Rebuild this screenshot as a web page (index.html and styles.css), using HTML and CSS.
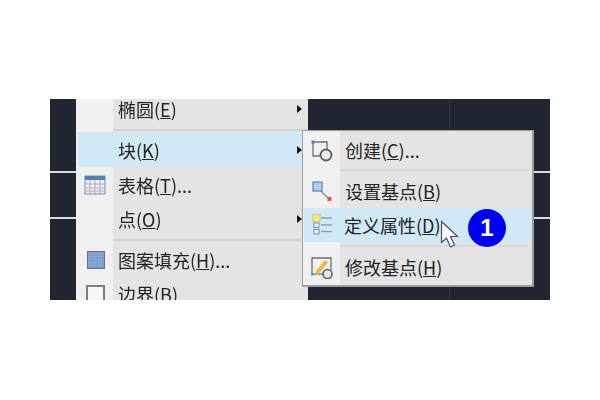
FILE: index.html
```html
<!DOCTYPE html>
<html lang="zh-CN">
<head>
  <meta charset="UTF-8" />
  <title>块菜单</title>
  <link rel="stylesheet" href="styles.css">
</head>
<body>
  <div class="canvas">
    <div class="menu">
      <div class="row first"><span class="icon"></span><span class="label">椭圆(<u>E</u>)</span><i class="arrow"></i></div>
      <div class="sep"></div>
      <div class="row active"><span class="icon"></span><span class="label">块(<u>K</u>)</span><i class="arrow"></i></div>
      <div class="row">
        <span class="icon">
          <svg width="22" height="20" viewBox="0 0 22 20">
            <rect x="1" y="1" width="20" height="18" fill="#f1eef2" stroke="#6b8fbb"/>
            <rect x="1" y="1" width="20" height="4" fill="#4f7fb5"/>
            <path d="M6 5v14M11 5v14M16 5v14M1 9h20M1 13h20M1 16h20" stroke="#b3a9b8" fill="none"/>
          </svg>
        </span>
        <span class="label">表格(<u>T</u>)...</span>
      </div>
      <div class="row"><span class="icon"></span><span class="label">点(<u>O</u>)</span><i class="arrow"></i></div>
      <div class="sep wide"></div>
      <div class="row">
        <span class="icon"><span class="hatch"></span></span>
        <span class="label">图案填充(<u>H</u>)...</span>
      </div>
      <div class="row">
        <span class="icon"><span class="box"></span></span>
        <span class="label">边界(<u>B</u>)</span>
      </div>

      <div class="submenu">
        <div class="row sub top">
          <span class="icon">
            <svg width="24" height="24" viewBox="0 0 24 24">
              <path d="M3 4h14v7M3 4v14h7" fill="none" stroke="#6e6e6e" stroke-width="1.3"/>
              <rect x="1.5" y="2.5" width="3" height="3" fill="#4f7fb5"/>
              <circle cx="16" cy="17" r="5.5" fill="#e8e8e8" stroke="#5f5f5f" stroke-width="1.8"/>
            </svg>
          </span>
          <span class="label">创建(<u>C</u>)...</span>
        </div>
        <div class="sep"></div>
        <div class="row sub">
          <span class="icon">
            <svg width="24" height="24" viewBox="0 0 24 24">
              <path d="M11 12l8 8" stroke="#8e8e8e" stroke-width="1.5"/>
              <rect x="3" y="3" width="9" height="9" fill="#aacdf0" stroke="#5c85b5" stroke-width="1.2"/>
              <rect x="17.5" y="18" width="4" height="4" fill="#dd5a33"/>
            </svg>
          </span>
          <span class="label">设置基点(<u>B</u>)</span>
        </div>
        <div class="row sub active">
          <span class="icon">
            <svg width="24" height="24" viewBox="0 0 24 24">
              <rect x="3" y="1.5" width="7" height="7" fill="#f5e58c" stroke="#d8c766"/>
              <path d="M11 5h11M11 12h11M11 18.500h11" stroke="#9a9fa4" stroke-width="1.4"/>
              <rect x="4" y="10" width="5" height="4.500" fill="#e8f2fa" stroke="#6f8fb0"/>
              <rect x="4" y="16.500" width="5" height="4.500" fill="#e8f2fa" stroke="#6f8fb0"/>
            </svg>
          </span>
          <span class="label">定义属性(<u>D</u>)</span>
        </div>
        <div class="sep"></div>
        <div class="row sub">
          <span class="icon">
            <svg width="24" height="24" viewBox="0 0 24 24">
              <path d="M2 19V3h19v12" fill="none" stroke="#6e6e6e" stroke-width="1.3"/>
              <path d="M2 19h12" stroke="#6e6e6e" stroke-width="1.3"/>
              <path d="M6 16l9-11 3 2.500-9 11-3.500 1z" fill="#f3b64a"/>
              <rect x="1" y="18" width="3" height="2.500" fill="#3aa0e8"/>
              <circle cx="17.500" cy="19" r="4.500" fill="#e8e8e8" stroke="#5f5f5f" stroke-width="1.6"/>
            </svg>
          </span>
          <span class="label">修改基点(<u>H</u>)</span>
        </div>
      </div>

      <svg class="cursor" width="20" height="30" viewBox="0 0 20 30">
        <path d="M1.500 1.500v21l5-4.500 4 9 4-2-4-8.500h7z" fill="#fff" stroke="#4a4f55" stroke-width="1.200"/>
      </svg>
      <div class="badge">1</div>
    </div>
  </div>
</body>
</html>
```

FILE: styles.css
```css
body {
  margin: 0;
  background-color: #fff;
}

.canvas {
  display: flex;
  width: 500px;
  height: 201px;
  margin: 99px 50px 0;
  padding-left: 26px;
  box-sizing: border-box;
  overflow: hidden;
  background-color: #1f2630;
  background-image:
    linear-gradient(#d8dadc, #d8dadc),
    linear-gradient(#d8dadc, #d8dadc),
    linear-gradient(#2f3742, #2f3742);
  background-size: 100% 2px, 100% 2px, 1px 100%;
  background-position: 0 72px, 0 118px, 399px 0;
  background-repeat: no-repeat;
}

.menu {
  position: relative;
  width: 232px;
  height: 240px;
  flex: none;
  background-color: #e4e4e4;
  background-image: linear-gradient(#f0f0f0, #f0f0f0);
  background-size: 37px 100%;
  background-repeat: no-repeat;
  font-family: "Noto Sans CJK SC", "Liberation Sans", sans-serif;
  font-size: 18px;
  line-height: 20px;
  color: #222;
  filter: blur(0.35px);
}

.row {
  display: flex;
  align-items: center;
  height: 34px;
}

.row.first {
  height: 20px;
  padding-bottom: 10px;
}

.row.active {
  height: 35px;
  margin: 1px 5px 1px 2px;
  background-color: #d1e9f7;
}

.row.active .icon {
  width: 35px;
}

.icon {
  display: flex;
  align-items: center;
  justify-content: center;
  width: 37px;
  height: 100%;
  flex: none;
}

.label {
  margin-left: 5px;
  white-space: nowrap;
}

.arrow {
  margin-left: auto;
  margin-right: 6px;
  border-left: 5px solid #111;
  border-top: 4px solid transparent;
  border-bottom: 4px solid transparent;
}

.row.active .arrow {
  margin-right: 1px;
}

.sep {
  height: 2px;
  margin-left: 37px;
  background-color: #d2d2d2;
}

.sep.wide {
  margin-top: 3px;
  margin-bottom: 2px;
}

.hatch {
  width: 16px;
  height: 16px;
  margin-left: 2px;
  border: 1px solid #6f6f6f;
  background-color: #7f9fd0;
  background-image: radial-gradient(#9db8e0 40%, transparent 45%);
  background-size: 3px 3px;
}

.box {
  width: 15px;
  height: 15px;
  margin-left: 2px;
  border: 2px solid #7d7d7d;
  background-color: #f7f7f7;
}

.submenu {
  position: absolute;
  left: 226px;
  top: 31px;
  width: 232px;
  height: 157px;
  box-sizing: border-box;
  border: 1px solid #9c9c9c;
  border-bottom-width: 2px;
  border-right-width: 2px;
  background-color: #e4e4e4;
  background-image: linear-gradient(#f0f0f0, #f0f0f0);
  background-size: 37px 100%;
  background-repeat: no-repeat;
}

.submenu .sep {
  margin-right: 3px;
  background-color: #d8d8d8;
}

.row.sub {
  height: 39px;
}

.row.sub.top {
  height: 38px;
}

.row.sub.active {
  height: 34px;
  margin: -2px 1px 3px;
}

.cursor {
  position: absolute;
  left: 364px;
  top: 121px;
}

.badge {
  position: absolute;
  left: 392px;
  top: 110px;
  width: 38px;
  height: 38px;
  border-radius: 50%;
  background-color: #0000f0;
  color: #fff;
  font-family: "Liberation Sans", sans-serif;
  font-size: 24px;
  font-weight: bold;
  line-height: 38px;
  text-align: center;
}
```
